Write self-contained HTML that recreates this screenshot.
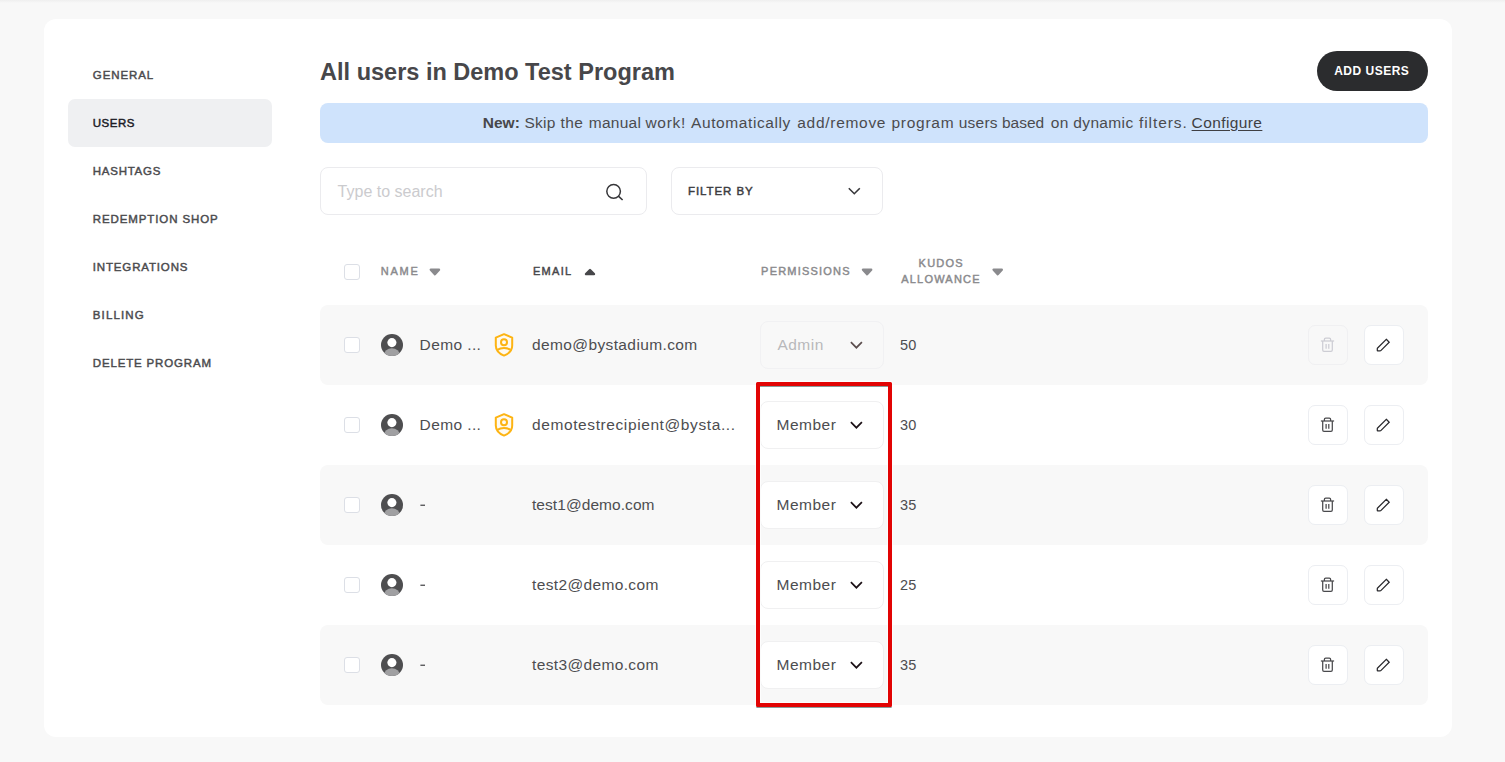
<!DOCTYPE html>
<html>
<head>
<meta charset="utf-8">
<title>Users</title>
<style>
*{box-sizing:border-box;margin:0;padding:0}
html,body{width:1505px;height:762px;overflow:hidden}
body{background:#f8f8f8;font-family:"Liberation Sans",sans-serif;position:relative;color:#4a4a4a}
.topshade{position:absolute;left:0;top:0;width:1505px;height:3px;background:linear-gradient(#efefef,#f8f8f8)}
.card{position:absolute;left:44px;top:19px;width:1408px;height:718px;background:#fff;border-radius:12px}
.t{position:absolute;white-space:nowrap;line-height:20px;height:20px}
.b{font-weight:bold}
.sb{font-weight:normal;-webkit-text-stroke:.45px currentColor}
.navact{position:absolute;left:68px;top:99px;width:204px;height:48px;background:#eff0f2;border-radius:7px}
.addbtn{position:absolute;left:1317px;top:51px;width:111px;height:40px;border-radius:20px;background:#2b2c2e}
.banner{position:absolute;left:320px;top:103px;width:1108px;height:40px;border-radius:8px;background:#cfe3fc}
.box{position:absolute;border:1px solid #ebebee;border-radius:8px;background:#fff}
.row{position:absolute;left:320px;width:1108px;height:80px;border-radius:8px}
.row.g{background:#f8f8f8}
.cb{position:absolute;left:344px;width:16px;height:16px;border:1px solid #dcdfe6;border-radius:3px;background:#fff}
.sel{position:absolute;left:760px;width:124px;height:48px;border:1px solid #f0f0f1;border-radius:8px;background:#fff}
.sel.dis{background:#f8f8f8;border-color:#f1f1f3}
.ibtn{position:absolute;width:40px;height:40px;border:1px solid #eceef2;border-radius:7px;background:#fff}
.ibtn.dis{background:#f8f8f8;border-color:#f0f0f2}
svg{position:absolute;overflow:visible}
.red{position:absolute;left:756px;top:382px;width:136px;height:325px;border:4px solid #e20404;border-radius:1.5px;box-shadow:0 1px .5px rgba(40,75,75,.55),inset 0 1px .5px rgba(40,75,75,.55),0 0 0 1px rgba(255,255,255,.7),inset 0 0 0 1px rgba(255,255,255,.7)}
</style>
</head>
<body>
<div class="topshade"></div>
<div class="card"></div>
<div class="navact"></div>
<div class="t sb" style="left:92.8px;top:65px;font-size:11.5px;color:#4b4b4e;letter-spacing:0.897px;">GENERAL</div>
<div class="t sb" style="left:92.8px;top:113px;font-size:11.5px;color:#1c1c26;letter-spacing:0.5px;">USERS</div>
<div class="t sb" style="left:92.8px;top:161px;font-size:11.5px;color:#4b4b4e;letter-spacing:0.73px;">HASHTAGS</div>
<div class="t sb" style="left:92.8px;top:209px;font-size:11.5px;color:#4b4b4e;letter-spacing:0.89px;">REDEMPTION SHOP</div>
<div class="t sb" style="left:92.8px;top:257px;font-size:11.5px;color:#4b4b4e;letter-spacing:0.843px;">INTEGRATIONS</div>
<div class="t sb" style="left:92.8px;top:305px;font-size:11.5px;color:#4b4b4e;letter-spacing:1.13px;">BILLING</div>
<div class="t sb" style="left:92.8px;top:353px;font-size:11.5px;color:#4b4b4e;letter-spacing:0.834px;">DELETE PROGRAM</div>
<div class="t b" style="left:320.1px;top:61.5px;font-size:23.5px;color:#47474a;letter-spacing:0px;line-height:28px;height:28px;margin-top:-4px">All users in Demo Test Program</div>
<div class="addbtn"></div>
<div class="t b" style="left:1334.2px;top:61px;font-size:12px;color:#fff;letter-spacing:0.5px;">ADD USERS</div>
<div class="banner"></div>
<div class="t b" style="left:482.8px;top:113px;font-size:15.5px;color:#47474a;letter-spacing:0px;">New:</div>
<div class="t" style="left:524.5px;top:113px;font-size:15.5px;color:#4b4b4e;letter-spacing:0.267px;">Skip</div>
<div class="t" style="left:560.4px;top:113px;font-size:15.5px;color:#4b4b4e;letter-spacing:0.5px;">the</div>
<div class="t" style="left:588.8px;top:113px;font-size:15.5px;color:#4b4b4e;letter-spacing:0.262px;">manual</div>
<div class="t" style="left:645.4px;top:113px;font-size:15.5px;color:#4b4b4e;letter-spacing:0.728px;">work!</div>
<div class="t" style="left:691px;top:113px;font-size:15.5px;color:#4b4b4e;letter-spacing:0.594px;">Automatically</div>
<div class="t" style="left:797.3px;top:113px;font-size:15.5px;color:#4b4b4e;letter-spacing:0.702px;">add/remove</div>
<div class="t" style="left:891.5px;top:113px;font-size:15.5px;color:#4b4b4e;letter-spacing:0.734px;">program</div>
<div class="t" style="left:958.7px;top:113px;font-size:15.5px;color:#4b4b4e;letter-spacing:0.238px;">users</div>
<div class="t" style="left:1001.98px;top:113px;font-size:15.5px;color:#4b4b4e;letter-spacing:0.01px;">based</div>
<div class="t" style="left:1050.7px;top:113px;font-size:15.5px;color:#4b4b4e;letter-spacing:0.5px;">on</div>
<div class="t" style="left:1073.3px;top:113px;font-size:15.5px;color:#4b4b4e;letter-spacing:0.36px;">dynamic</div>
<div class="t" style="left:1139px;top:113px;font-size:15.5px;color:#4b4b4e;letter-spacing:0.91px;">filters.</div>
<div class="t" style="left:1191.6px;top:113px;font-size:15.5px;color:#3f3f43;letter-spacing:0.395px;text-decoration:underline;text-underline-offset:2px">Configure</div>
<div class="box" style="left:320px;top:167px;width:327px;height:48px"></div>
<div class="t" style="left:337.6px;top:182px;font-size:16px;color:#cbcbce;letter-spacing:0px;">Type to search</div>
<svg style="left:605px;top:183px" width="20" height="20" viewBox="0 0 20 20"><circle cx="8.6" cy="8.35" r="6.8" fill="none" stroke="#37373a" stroke-width="1.5"/><path d="M13.4 13.15 L17.6 17" stroke="#37373a" stroke-width="1.6" stroke-linecap="butt"/></svg>
<div class="box" style="left:671px;top:167px;width:212px;height:48px"></div>
<div class="t sb" style="left:688px;top:181px;font-size:11.5px;color:#3c3c40;letter-spacing:0.919px;">FILTER BY</div>
<svg style="left:848px;top:187px" width="13" height="9" viewBox="0 0 13 9"><g transform="translate(0.3 0)"><path d="M0.5 1.2 L6 6.7 L11.5 1.2" fill="none" stroke="#37373a" stroke-width="1.6"/></g></svg>
<div class="cb" style="top:264px"></div>
<div class="t sb" style="left:380.8px;top:261px;font-size:11px;color:#8a8a8d;letter-spacing:1.72px;">NAME</div>
<svg style="left:429px;top:268px" width="13" height="9" viewBox="0 0 13 9"><g transform="translate(0.2 0.2)"><path d="M1.6 1.45 H9.8 L5.7 6.1Z" fill="#8a8a8d" stroke="#8a8a8d" stroke-width="2.4" stroke-linejoin="round"/></g></svg>
<div class="t sb" style="left:532.9px;top:261px;font-size:11px;color:#47474a;letter-spacing:1.3px;">EMAIL</div>
<svg style="left:584px;top:268px" width="13" height="9" viewBox="0 0 13 9"><g transform="translate(0.5 0.2)"><path d="M1.5 5.9 H9.5 L5.5 1.8Z" fill="#47474a" stroke="#47474a" stroke-width="2.4" stroke-linejoin="round"/></g></svg>
<div class="t sb" style="left:761.1px;top:261px;font-size:11px;color:#8a8a8d;letter-spacing:1.2px;">PERMISSIONS</div>
<svg style="left:861px;top:268px" width="13" height="9" viewBox="0 0 13 9"><g transform="translate(0.4 0.2)"><path d="M1.6 1.45 H9.8 L5.7 6.1Z" fill="#8a8a8d" stroke="#8a8a8d" stroke-width="2.4" stroke-linejoin="round"/></g></svg>
<div class="t sb" style="left:918.6px;top:253px;font-size:11px;color:#8a8a8d;letter-spacing:1.2px;">KUDOS</div>
<div class="t sb" style="left:901.2px;top:269px;font-size:11px;color:#8a8a8d;letter-spacing:1.214px;">ALLOWANCE</div>
<svg style="left:992px;top:268px" width="13" height="9" viewBox="0 0 13 9"><g transform="translate(0 0.2)"><path d="M1.6 1.45 H9.8 L5.7 6.1Z" fill="#8a8a8d" stroke="#8a8a8d" stroke-width="2.4" stroke-linejoin="round"/></g></svg>
<div class="row g" style="top:305px"></div>
<div class="row" style="top:385px"></div>
<div class="row g" style="top:465px"></div>
<div class="row" style="top:545px"></div>
<div class="row g" style="top:625px"></div>
<div class="cb" style="top:337px"></div>
<svg style="left:381px;top:334px" width="22" height="22" viewBox="0 0 22 22"><defs><clipPath id="c0"><circle cx="11" cy="11" r="11"/></clipPath></defs><circle cx="11" cy="11" r="11" fill="#4e4e50"/><circle cx="10.9" cy="8.6" r="4.55" fill="#fff"/><ellipse cx="10.9" cy="21.2" rx="8" ry="7" fill="#a0a0a2" clip-path="url(#c0)"/></svg>
<div class="t" style="left:419.56px;top:335px;font-size:15.5px;color:#4d4d50;letter-spacing:0.4px;">Demo ...</div>
<svg style="left:494px;top:333px" width="20" height="24" viewBox="0 0 20 24"><path d="M10 1.2 L18.2 4.6 V12.5 C18.2 17.5 14.5 20.8 10 22.6 C5.5 20.8 1.8 17.5 1.8 12.5 V4.6 Z" fill="#fffaf0" stroke="#fdb413" stroke-width="2" stroke-linejoin="round"/><circle cx="10" cy="9.3" r="3" fill="none" stroke="#fdb413" stroke-width="2"/><path d="M3.4 16.9 C5.4 15.5 7.5 15 10 15 C12.5 15 14.6 15.5 16.6 16.9" fill="none" stroke="#fdb413" stroke-width="1.9"/></svg>
<div class="t" style="left:532px;top:335px;font-size:15.5px;color:#4d4d50;letter-spacing:0.382px;">demo@bystadium.com</div>
<div class="sel dis" style="top:321px"></div>
<div class="t" style="left:777.4px;top:335px;font-size:15.5px;color:#b8b8bb;letter-spacing:0.5px;">Admin</div>
<svg style="left:850px;top:341px" width="13" height="9" viewBox="0 0 13 9"><g transform="translate(0.4 0)"><path d="M0.5 1.2 L6 6.7 L11.5 1.2" fill="none" stroke="#5b4d4d" stroke-width="1.7"/></g></svg>
<div class="t" style="left:900.1px;top:335px;font-size:14.5px;color:#4d4d50;letter-spacing:0.2px;">50</div>
<div class="ibtn dis" style="left:1308px;top:325px"></div>
<svg style="left:1320px;top:337px" width="15" height="17" viewBox="0 0 15 17"><g transform="translate(0.5 0)"><g fill="none" stroke="#cdcdd4" stroke-width="1.25" stroke-linejoin="round"><path d="M0.4 4 H13.6"/><path d="M3.9 4 V2.3 Q3.9 1 5.2 1 H8.8 Q10.1 1 10.1 2.3 V4"/><path d="M2.2 4 V13 Q2.2 14.3 3.5 14.3 H10.5 Q11.8 14.3 11.8 13 V4"/><path d="M5.6 7.1 V11.8 M8.3 7.1 V11.8"/></g></g></svg>
<div class="ibtn" style="left:1364px;top:325px"></div>
<svg style="left:1376px;top:338px" width="16" height="16" viewBox="0 0 16 16"><g transform="translate(0 0)"><path d="M10.3 1.3 L13.2 4.2 L4.8 12.6 Q4.5 12.9 4.1 12.9 H1.7 Q1.3 12.9 1.3 12.5 V10.7 Q1.3 10.3 1.6 10 Z" fill="none" stroke="#2a2a2e" stroke-width="1.25" stroke-linejoin="miter"/></g></svg>
<div class="cb" style="top:417px"></div>
<svg style="left:381px;top:414px" width="22" height="22" viewBox="0 0 22 22"><defs><clipPath id="c1"><circle cx="11" cy="11" r="11"/></clipPath></defs><circle cx="11" cy="11" r="11" fill="#4e4e50"/><circle cx="10.9" cy="8.6" r="4.55" fill="#fff"/><ellipse cx="10.9" cy="21.2" rx="8" ry="7" fill="#a0a0a2" clip-path="url(#c1)"/></svg>
<div class="t" style="left:419.56px;top:415px;font-size:15.5px;color:#4d4d50;letter-spacing:0.4px;">Demo ...</div>
<svg style="left:494px;top:413px" width="20" height="24" viewBox="0 0 20 24"><path d="M10 1.2 L18.2 4.6 V12.5 C18.2 17.5 14.5 20.8 10 22.6 C5.5 20.8 1.8 17.5 1.8 12.5 V4.6 Z" fill="#fffaf0" stroke="#fdb413" stroke-width="2" stroke-linejoin="round"/><circle cx="10" cy="9.3" r="3" fill="none" stroke="#fdb413" stroke-width="2"/><path d="M3.4 16.9 C5.4 15.5 7.5 15 10 15 C12.5 15 14.6 15.5 16.6 16.9" fill="none" stroke="#fdb413" stroke-width="1.9"/></svg>
<div class="t" style="left:532px;top:415px;font-size:15.5px;color:#4d4d50;letter-spacing:0.598px;">demotestrecipient@bysta...</div>
<div class="sel" style="top:401px"></div>
<div class="t" style="left:776.56px;top:415px;font-size:15.5px;color:#4d4d50;letter-spacing:0.5px;">Member</div>
<svg style="left:850px;top:421px" width="13" height="9" viewBox="0 0 13 9"><g transform="translate(0.4 0)"><path d="M0.5 1.2 L6 6.7 L11.5 1.2" fill="none" stroke="#1b1015" stroke-width="1.7"/></g></svg>
<div class="t" style="left:900.1px;top:415px;font-size:14.5px;color:#4d4d50;letter-spacing:0.2px;">30</div>
<div class="ibtn" style="left:1308px;top:405px"></div>
<svg style="left:1320px;top:417px" width="15" height="17" viewBox="0 0 15 17"><g transform="translate(0.5 0)"><g fill="none" stroke="#4a4a4d" stroke-width="1.25" stroke-linejoin="round"><path d="M0.4 4 H13.6"/><path d="M3.9 4 V2.3 Q3.9 1 5.2 1 H8.8 Q10.1 1 10.1 2.3 V4"/><path d="M2.2 4 V13 Q2.2 14.3 3.5 14.3 H10.5 Q11.8 14.3 11.8 13 V4"/><path d="M5.6 7.1 V11.8 M8.3 7.1 V11.8"/></g></g></svg>
<div class="ibtn" style="left:1364px;top:405px"></div>
<svg style="left:1376px;top:418px" width="16" height="16" viewBox="0 0 16 16"><g transform="translate(0 0)"><path d="M10.3 1.3 L13.2 4.2 L4.8 12.6 Q4.5 12.9 4.1 12.9 H1.7 Q1.3 12.9 1.3 12.5 V10.7 Q1.3 10.3 1.6 10 Z" fill="none" stroke="#2a2a2e" stroke-width="1.25" stroke-linejoin="miter"/></g></svg>
<div class="cb" style="top:497px"></div>
<svg style="left:381px;top:494px" width="22" height="22" viewBox="0 0 22 22"><defs><clipPath id="c2"><circle cx="11" cy="11" r="11"/></clipPath></defs><circle cx="11" cy="11" r="11" fill="#4e4e50"/><circle cx="10.9" cy="8.6" r="4.55" fill="#fff"/><ellipse cx="10.9" cy="21.2" rx="8" ry="7" fill="#a0a0a2" clip-path="url(#c2)"/></svg>
<svg style="left:420px;top:504px" width="6" height="3" viewBox="0 0 6 3"><g transform="translate(0.4 0.6)"><rect x="0" y="0" width="4.6" height="1.3" fill="#4d4d50"/></g></svg>
<div class="t" style="left:532px;top:495px;font-size:15.5px;color:#4d4d50;letter-spacing:0.063px;">test1@demo.com</div>
<div class="sel" style="top:481px"></div>
<div class="t" style="left:776.56px;top:495px;font-size:15.5px;color:#4d4d50;letter-spacing:0.5px;">Member</div>
<svg style="left:850px;top:501px" width="13" height="9" viewBox="0 0 13 9"><g transform="translate(0.4 0)"><path d="M0.5 1.2 L6 6.7 L11.5 1.2" fill="none" stroke="#1b1015" stroke-width="1.7"/></g></svg>
<div class="t" style="left:900.1px;top:495px;font-size:14.5px;color:#4d4d50;letter-spacing:0.2px;">35</div>
<div class="ibtn" style="left:1308px;top:485px"></div>
<svg style="left:1320px;top:497px" width="15" height="17" viewBox="0 0 15 17"><g transform="translate(0.5 0)"><g fill="none" stroke="#4a4a4d" stroke-width="1.25" stroke-linejoin="round"><path d="M0.4 4 H13.6"/><path d="M3.9 4 V2.3 Q3.9 1 5.2 1 H8.8 Q10.1 1 10.1 2.3 V4"/><path d="M2.2 4 V13 Q2.2 14.3 3.5 14.3 H10.5 Q11.8 14.3 11.8 13 V4"/><path d="M5.6 7.1 V11.8 M8.3 7.1 V11.8"/></g></g></svg>
<div class="ibtn" style="left:1364px;top:485px"></div>
<svg style="left:1376px;top:498px" width="16" height="16" viewBox="0 0 16 16"><g transform="translate(0 0)"><path d="M10.3 1.3 L13.2 4.2 L4.8 12.6 Q4.5 12.9 4.1 12.9 H1.7 Q1.3 12.9 1.3 12.5 V10.7 Q1.3 10.3 1.6 10 Z" fill="none" stroke="#2a2a2e" stroke-width="1.25" stroke-linejoin="miter"/></g></svg>
<div class="cb" style="top:577px"></div>
<svg style="left:381px;top:574px" width="22" height="22" viewBox="0 0 22 22"><defs><clipPath id="c3"><circle cx="11" cy="11" r="11"/></clipPath></defs><circle cx="11" cy="11" r="11" fill="#4e4e50"/><circle cx="10.9" cy="8.6" r="4.55" fill="#fff"/><ellipse cx="10.9" cy="21.2" rx="8" ry="7" fill="#a0a0a2" clip-path="url(#c3)"/></svg>
<svg style="left:420px;top:584px" width="6" height="3" viewBox="0 0 6 3"><g transform="translate(0.4 0.6)"><rect x="0" y="0" width="4.6" height="1.3" fill="#4d4d50"/></g></svg>
<div class="t" style="left:532px;top:575px;font-size:15.5px;color:#4d4d50;letter-spacing:0.359px;">test2@demo.com</div>
<div class="sel" style="top:561px"></div>
<div class="t" style="left:776.56px;top:575px;font-size:15.5px;color:#4d4d50;letter-spacing:0.5px;">Member</div>
<svg style="left:850px;top:581px" width="13" height="9" viewBox="0 0 13 9"><g transform="translate(0.4 0)"><path d="M0.5 1.2 L6 6.7 L11.5 1.2" fill="none" stroke="#1b1015" stroke-width="1.7"/></g></svg>
<div class="t" style="left:900.1px;top:575px;font-size:14.5px;color:#4d4d50;letter-spacing:0.2px;">25</div>
<div class="ibtn" style="left:1308px;top:565px"></div>
<svg style="left:1320px;top:577px" width="15" height="17" viewBox="0 0 15 17"><g transform="translate(0.5 0)"><g fill="none" stroke="#4a4a4d" stroke-width="1.25" stroke-linejoin="round"><path d="M0.4 4 H13.6"/><path d="M3.9 4 V2.3 Q3.9 1 5.2 1 H8.8 Q10.1 1 10.1 2.3 V4"/><path d="M2.2 4 V13 Q2.2 14.3 3.5 14.3 H10.5 Q11.8 14.3 11.8 13 V4"/><path d="M5.6 7.1 V11.8 M8.3 7.1 V11.8"/></g></g></svg>
<div class="ibtn" style="left:1364px;top:565px"></div>
<svg style="left:1376px;top:578px" width="16" height="16" viewBox="0 0 16 16"><g transform="translate(0 0)"><path d="M10.3 1.3 L13.2 4.2 L4.8 12.6 Q4.5 12.9 4.1 12.9 H1.7 Q1.3 12.9 1.3 12.5 V10.7 Q1.3 10.3 1.6 10 Z" fill="none" stroke="#2a2a2e" stroke-width="1.25" stroke-linejoin="miter"/></g></svg>
<div class="cb" style="top:657px"></div>
<svg style="left:381px;top:654px" width="22" height="22" viewBox="0 0 22 22"><defs><clipPath id="c4"><circle cx="11" cy="11" r="11"/></clipPath></defs><circle cx="11" cy="11" r="11" fill="#4e4e50"/><circle cx="10.9" cy="8.6" r="4.55" fill="#fff"/><ellipse cx="10.9" cy="21.2" rx="8" ry="7" fill="#a0a0a2" clip-path="url(#c4)"/></svg>
<svg style="left:420px;top:664px" width="6" height="3" viewBox="0 0 6 3"><g transform="translate(0.4 0.6)"><rect x="0" y="0" width="4.6" height="1.3" fill="#4d4d50"/></g></svg>
<div class="t" style="left:532px;top:655px;font-size:15.5px;color:#4d4d50;letter-spacing:0.359px;">test3@demo.com</div>
<div class="sel" style="top:641px"></div>
<div class="t" style="left:776.56px;top:655px;font-size:15.5px;color:#4d4d50;letter-spacing:0.5px;">Member</div>
<svg style="left:850px;top:661px" width="13" height="9" viewBox="0 0 13 9"><g transform="translate(0.4 0)"><path d="M0.5 1.2 L6 6.7 L11.5 1.2" fill="none" stroke="#1b1015" stroke-width="1.7"/></g></svg>
<div class="t" style="left:900.1px;top:655px;font-size:14.5px;color:#4d4d50;letter-spacing:0.2px;">35</div>
<div class="ibtn" style="left:1308px;top:645px"></div>
<svg style="left:1320px;top:657px" width="15" height="17" viewBox="0 0 15 17"><g transform="translate(0.5 0)"><g fill="none" stroke="#4a4a4d" stroke-width="1.25" stroke-linejoin="round"><path d="M0.4 4 H13.6"/><path d="M3.9 4 V2.3 Q3.9 1 5.2 1 H8.8 Q10.1 1 10.1 2.3 V4"/><path d="M2.2 4 V13 Q2.2 14.3 3.5 14.3 H10.5 Q11.8 14.3 11.8 13 V4"/><path d="M5.6 7.1 V11.8 M8.3 7.1 V11.8"/></g></g></svg>
<div class="ibtn" style="left:1364px;top:645px"></div>
<svg style="left:1376px;top:658px" width="16" height="16" viewBox="0 0 16 16"><g transform="translate(0 0)"><path d="M10.3 1.3 L13.2 4.2 L4.8 12.6 Q4.5 12.9 4.1 12.9 H1.7 Q1.3 12.9 1.3 12.5 V10.7 Q1.3 10.3 1.6 10 Z" fill="none" stroke="#2a2a2e" stroke-width="1.25" stroke-linejoin="miter"/></g></svg>
<div class="red"></div>
</body>
</html>
